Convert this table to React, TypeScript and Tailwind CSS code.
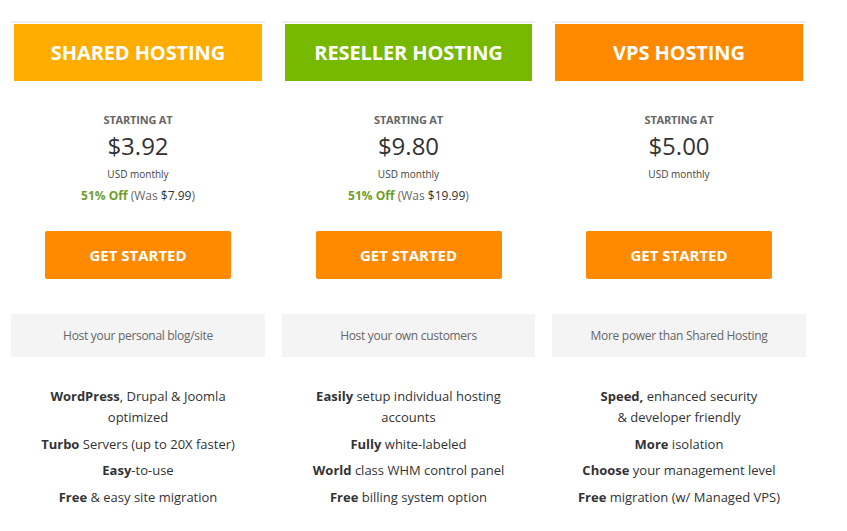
import React from "react";

type Plan = {
  title: string;
  color: string;
  price: string;
  discount?: { off: string; was: string };
  tagline: string;
  features: React.ReactNode[];
};

const plans: Plan[] = [
  {
    title: "SHARED HOSTING",
    color: "bg-[#ffad00]",
    price: "$3.92",
    discount: { off: "51% Off", was: "$7.99" },
    tagline: "Host your personal blog/site",
    features: [
      <><b>WordPress</b>, Drupal &amp; Joomla<br />optimized</>,
      <><b>Turbo</b> Servers (up to 20X faster)</>,
      <><b>Easy</b>-to-use</>,
      <><b>Free</b> &amp; easy site migration</>,
    ],
  },
  {
    title: "RESELLER HOSTING",
    color: "bg-[#76b900]",
    price: "$9.80",
    discount: { off: "51% Off", was: "$19.99" },
    tagline: "Host your own customers",
    features: [
      <><b>Easily</b> setup individual hosting<br />accounts</>,
      <><b>Fully</b> white-labeled</>,
      <><b>World</b> class WHM control panel</>,
      <><b>Free</b> billing system option</>,
    ],
  },
  {
    title: "VPS HOSTING",
    color: "bg-[#ff8a00]",
    price: "$5.00",
    tagline: "More power than Shared Hosting",
    features: [
      <><b>Speed,</b> enhanced security<br />&amp; developer friendly</>,
      <><b>More</b> isolation</>,
      <><b>Choose</b> your management level</>,
      <><b>Free</b> migration (w/ Managed VPS)</>,
    ],
  },
];

const PlanColumn = ({ plan }: { plan: Plan }) => (
  <div className="flex flex-col items-center">
    <div className="w-full border-t-2 border-[#eeeeee] pt-[1px] px-[3px]">
      <div className={`${plan.color} h-[57px] flex items-center justify-center`}>
        <h2 className="text-white font-bold text-[20px] tracking-[-0.1px]">{plan.title}</h2>
      </div>
    </div>

    {/* Price block */}
    <div className="h-[150px] pt-[31px] flex flex-col items-center">
      <div className="text-[11px] font-bold text-[#666] leading-[16px] tracking-[-0.2px]">STARTING AT</div>
      <div className="text-[24px] text-[#333] leading-[30px] mt-[3px]">{plan.price}</div>
      <div className="text-[10px] text-[#444] leading-[16px] mt-[5px]">USD monthly</div>
      {plan.discount && (
        <div className="text-[12px] leading-[18px] mt-[5px] text-[#666]">
          <b className="text-[#6e9e2c]">{plan.discount.off}</b> (Was <span className="text-[#333]">{plan.discount.was}</span>)
        </div>
      )}
    </div>

    <button className="w-[186px] h-[48px] rounded-[2px] bg-[#ff8a00] text-white font-bold text-[15px]">
      GET STARTED
    </button>

    <div className="w-full h-[43px] mt-[35px] bg-[#f4f4f4] flex items-center justify-center text-[12px] tracking-[-0.3px] text-[#666]">
      {plan.tagline}
    </div>

    <ul className="mt-[29px] flex flex-col gap-[5.5px] text-[13px] leading-[21px] text-[#333] text-center">
      {plan.features.map((f, i) => (
        <li key={i}>{f}</li>
      ))}
    </ul>
  </div>
);

export default function App() {
  return (
    <div className="w-[847px] h-[531px] bg-white overflow-hidden" style={{ fontFamily: '"Open Sans", "Liberation Sans", sans-serif' }}>
      <div className="pl-[11px] pt-[21px] grid grid-cols-[254px_253px_254px] gap-x-[17px]">
        {plans.map((p) => (
          <PlanColumn key={p.title} plan={p} />
        ))}
      </div>
    </div>
  );
}
